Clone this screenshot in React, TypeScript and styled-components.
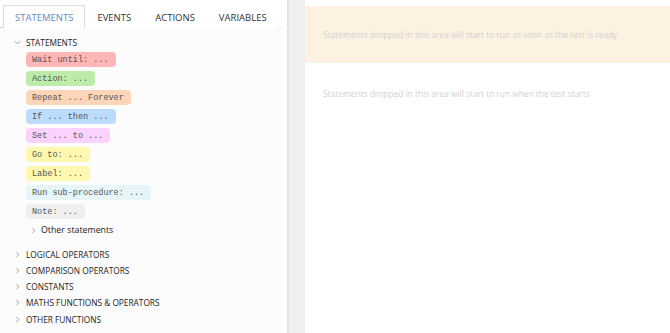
import styled, { createGlobalStyle } from 'styled-components'

const GlobalStyle = createGlobalStyle`
  html, body {
    margin: 0;
    padding: 0;
    background: #fff;
  }
  body {
    font-family: 'Open Sans', 'Noto Sans', sans-serif;
  }
`

const Page = styled.div`
  display: flex;
  width: 670px;
  height: 333px;
  overflow: hidden;
`

const Sidebar = styled.div`
  width: 287px;
  flex-shrink: 0;
  display: flex;
  flex-direction: column;
  background: #fff;
  border-right: 2px solid #e3e3e3;
`

const Tabs = styled.div`
  display: flex;
  align-items: flex-end;
  height: 28px;
  width: 281px;
  padding-left: 3px;
  box-sizing: border-box;
  border-bottom: 1px solid #dcdcdc;
`

const Tab = styled.div<{ $active?: boolean }>`
  height: 23px;
  box-sizing: border-box;
  padding: 1px 11px 0 11px;
  display: flex;
  align-items: center;
  font-size: 9.5px;
  color: ${({ $active }) => ($active ? '#6688c4' : '#333')};
  border: 1px solid ${({ $active }) => ($active ? '#dcdcdc' : 'transparent')};
  border-bottom: none;
  background: #fff;
  margin-bottom: -1px;
`

const Tree = styled.div`
  flex: 1;
  width: 281px;
  background: #fcfcfc;
  padding-top: 6px;
  box-sizing: border-box;
`

const Row = styled.div<{ $indent: number }>`
  display: flex;
  align-items: center;
  height: 16px;
  padding-left: ${({ $indent }) => $indent}px;
  font-size: 8.3px;
  color: #222;
  gap: 5px;
`

const Chevron = styled.svg`
  width: 7px;
  height: 7px;
  flex-shrink: 0;
`

const Blocks = styled.div`
  display: flex;
  flex-direction: column;
  align-items: flex-start;
  gap: 4px;
  padding-left: 26px;
  margin-top: 2px;
`

const Block = styled.div<{ $bg: string }>`
  height: 15px;
  display: flex;
  align-items: center;
  padding: 0 7px 0 6px;
  border-radius: 4px;
  background: ${({ $bg }) => $bg};
  font-family: 'Liberation Mono', 'DejaVu Sans Mono', monospace;
  font-size: 8.5px;
  color: #555;
  white-space: pre;
`

const OtherRow = styled(Row)`
  margin-top: 3px;
  font-size: 8.8px;
  gap: 4px;
`

const Groups = styled.div`
  margin-top: 8px;
  display: flex;
  flex-direction: column;
  gap: 0.25px;
`

const Gutter = styled.div`
  width: 16px;
  flex-shrink: 0;
  background: #efefef;
`

const Canvas = styled.div`
  flex: 1;
  display: flex;
  flex-direction: column;
  padding-top: 6px;
  background: #fff;
`

const DropZone = styled.div<{ $bg: string; $height: number }>`
  height: ${({ $height }) => $height}px;
  background: ${({ $bg }) => $bg};
  display: flex;
  align-items: center;
  padding-left: 18px;
  font-size: 8.4px;
  color: #d2d2d2;
`

const down = (
  <Chevron viewBox="0 0 8 8">
    <polyline points="1,2.5 4,5.5 7,2.5" fill="none" stroke="#888" strokeWidth="0.9" />
  </Chevron>
)

const right = (
  <Chevron viewBox="0 0 8 8">
    <polyline points="2.5,1 5.5,4 2.5,7" fill="none" stroke="#888" strokeWidth="0.9" />
  </Chevron>
)

const blocks = [
  { label: 'Wait until: ...', bg: '#ffb6b6' },
  { label: 'Action: ...', bg: '#bdeba9' },
  { label: 'Repeat ... Forever', bg: '#fdd5b9' },
  { label: 'If ... then ...', bg: '#bcdcfd' },
  { label: 'Set ... to ...', bg: '#fad2fb' },
  { label: 'Go to: ...', bg: '#fdf8ad' },
  { label: 'Label: ...', bg: '#fdf8ad' },
  { label: 'Run sub-procedure: ...', bg: '#e6f6f8' },
  { label: 'Note: ...', bg: '#efefef' },
]

const groups = [
  'LOGICAL OPERATORS',
  'COMPARISON OPERATORS',
  'CONSTANTS',
  'MATHS FUNCTIONS & OPERATORS',
  'OTHER FUNCTIONS',
]

export default function App() {
  return (
    <>
      <GlobalStyle />
      <Page>
        <Sidebar>
          <Tabs>
            <Tab $active>STATEMENTS</Tab>
            <Tab>EVENTS</Tab>
            <Tab>ACTIONS</Tab>
            <Tab>VARIABLES</Tab>
          </Tabs>
          <Tree>
            <Row $indent={14}>
              {down}
              STATEMENTS
            </Row>
            <Blocks>
              {blocks.map((b) => (
                <Block key={b.label} $bg={b.bg}>
                  {b.label}
                </Block>
              ))}
            </Blocks>
            <OtherRow $indent={30}>
              {right}
              Other statements
            </OtherRow>
            <Groups>
              {groups.map((g) => (
                <Row key={g} $indent={14}>
                  {right}
                  {g}
                </Row>
              ))}
            </Groups>
          </Tree>
        </Sidebar>
        <Gutter />
        <Canvas>
          <DropZone $bg="#fdf1e1" $height={57}>
            Statements dropped in this area will start to run as soon as the test is ready
          </DropZone>
          <DropZone $bg="#fff" $height={60}>
            Statements dropped in this area will start to run when the test starts
          </DropZone>
        </Canvas>
      </Page>
    </>
  )
}
